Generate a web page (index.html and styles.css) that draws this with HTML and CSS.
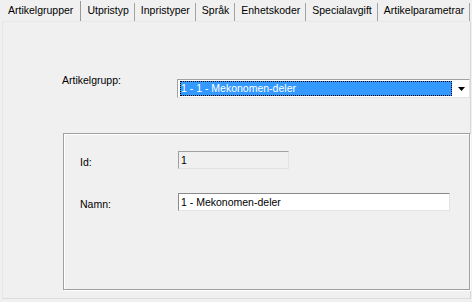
FILE: index.html
```html
<!DOCTYPE html>
<html lang="sv">
<head>
    <meta charset="UTF-8">
    <meta name="viewport" content="width=device-width, initial-scale=1.0">
    <title>Artikelgrupper</title>
    <link rel="stylesheet" href="styles.css">
</head>
<body>
    <div class="tab-control">
        <div class="tab-strip">
            <span class="tab active">Artikelgrupper</span>
            <span class="tab">Utpristyp</span>
            <span class="tab">Inpristyper</span>
            <span class="tab">Språk</span>
            <span class="tab">Enhetskoder</span>
            <span class="tab">Specialavgift</span>
            <span class="tab">Artikelparametrar</span>
        </div>

        <div class="tab-page">
            <div class="top-row">
                <label class="top-label" for="group">Artikelgrupp:</label>
                <div class="combo" id="group">
                    <span class="combo-value">1 - 1 - Mekonomen-deler</span>
                    <span class="combo-btn">
                        <svg width="7" height="4" viewBox="0 0 7 4"><path d="M0 0H7L3.5 4Z" fill="#000"/></svg>
                    </span>
                </div>
            </div>

            <!-- details for the selected group -->
            <div class="group-box">
                <div class="field-row">
                    <label class="field-label">Id:</label>
                    <div class="textbox readonly id-box">1</div>
                </div>
                <div class="field-row">
                    <label class="field-label">Namn:</label>
                    <div class="textbox name-box">1 - Mekonomen-deler</div>
                </div>
            </div>
        </div>
    </div>
</body>
</html>
```

FILE: styles.css
```css
body {
    margin: 0;
    padding: 0;
    background-color: #f0f0f0;
    font-family: "Liberation Sans", Arial, sans-serif;
    font-size: 10.5px;
    color: #000;
    width: 472px;
    height: 302px;
    overflow: hidden;
}

.tab-control {
    display: flex;
    flex-direction: column;
    height: 302px;
}

.tab-strip {
    display: flex;
    align-items: flex-start;
    padding-left: 2px;
    height: 21px;
}

.tab {
    margin-top: 3px;
    height: 18px;
    line-height: 15px;
    padding: 0 5px 0 6px;
    border-right: 1px solid #a3a3a3;
    white-space: nowrap;
}

.tab.active {
    margin-top: 1px;
    height: 20px;
    line-height: 19px;
    padding: 0 7px 0 6px;
    border-right-color: #9a9a9a;
}

.tab-page {
    flex: 1;
    margin: 0 1px 3px 2px;
    border: 1px solid #e6e6e6;
    border-top-color: #e9e9e9;
    border-right-color: #d8d8d8;
    border-bottom-color: #dcdcdc;
}

.top-row {
    display: flex;
    align-items: flex-start;
    padding: 52px 0 0 59px;
}

.top-label {
    width: 115px;
}

.combo {
    margin-top: 5px;
    flex: 1;
    display: flex;
    height: 17px;
    border: 1px solid;
    border-color: #a0a0a0 #e3e3e3 #e3e3e3 #a0a0a0;
    background-color: #fff;
}

.combo-value {
    flex: 1;
    margin: 1px 1px 1px 2px;
    padding-left: 1px;
    line-height: 15px;
    background-color: #3399ff;
    color: #fff;
    outline: 1px dotted #000;
    outline-offset: -1px;
}

.combo-btn {
    width: 16px;
    display: flex;
    align-items: center;
    justify-content: center;
    background-color: #fff;
}

.group-box {
    margin: 35px 0 0 60px;
    height: 138px;
    border: 1px solid #a0a0a0;
    box-shadow: inset 1px 1px 0 #fff, 1px 1px 0 #fff;
    padding: 17px 0 0 16px;
    box-sizing: content-box;
}

.field-row {
    display: flex;
    align-items: center;
    margin-bottom: 24px;
}

.field-label {
    width: 98px;
    padding-top: 3px;
}

.textbox {
    height: 16px;
    line-height: 16px;
    padding-left: 2px;
    border: 1px solid;
    border-color: #8a8a8a #e3e3e3 #e3e3e3 #8a8a8a;
    background-color: #fff;
    box-sizing: content-box;
}

.textbox.readonly {
    background-color: #f0f0f0;
    border-color: #a0a0a0 #e3e3e3 #e3e3e3 #a0a0a0;
}

.id-box {
    width: 107px;
}

.name-box {
    width: 268px;
}
```
